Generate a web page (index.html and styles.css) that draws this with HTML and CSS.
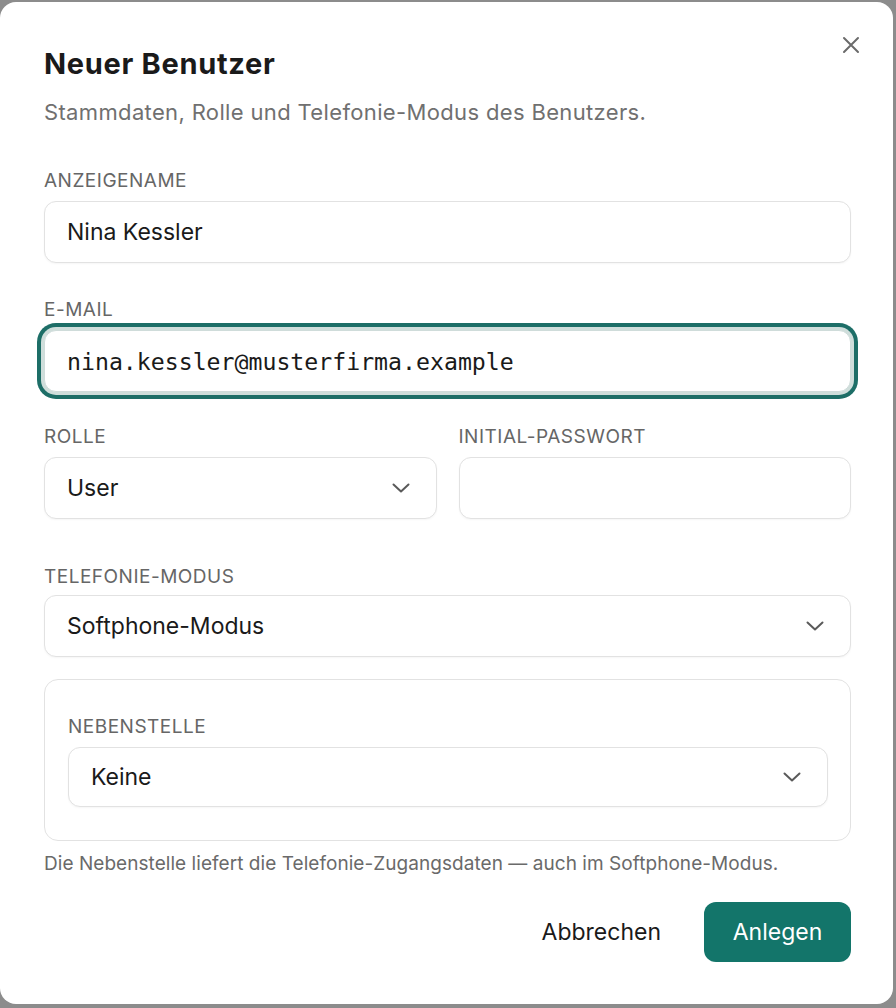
FILE: index.html
```html
<!DOCTYPE html>
<html lang="de">
<head>
<meta charset="utf-8">
<title>Neuer Benutzer</title>
<link rel="stylesheet" href="styles.css">
</head>
<body>
<div class="dialog">
  <button class="close" aria-label="Schließen">
    <svg width="18" height="18" viewBox="0 0 18 18"><path d="M2 2L16 16M16 2L2 16" stroke="#6b6b6b" stroke-width="2" stroke-linecap="round" fill="none"/></svg>
  </button>
  <h1 class="title">Neuer Benutzer</h1>
  <p class="subtitle">Stammdaten, Rolle und Telefonie-Modus des Benutzers.</p>

  <div class="field first">
    <div class="label">ANZEIGENAME</div>
    <div class="control">Nina Kessler</div>
  </div>

  <div class="field">
    <div class="label">E-MAIL</div>
    <div class="control focused mono">nina.kessler@musterfirma.example</div>
  </div>

  <div class="row">
    <div class="field">
      <div class="label">ROLLE</div>
      <div class="control select">User<svg class="chev" width="18" height="10" viewBox="0 0 18 10"><path d="M1.5 1.5L9 8.5L16.5 1.5" stroke="#5a5a5a" stroke-width="2" fill="none" stroke-linecap="round" stroke-linejoin="round"/></svg></div>
    </div>
    <div class="field">
      <div class="label">INITIAL-PASSWORT</div>
      <div class="control"></div>
    </div>
  </div>

  <div class="field tel">
    <div class="label">TELEFONIE-MODUS</div>
    <div class="control select">Softphone-Modus<svg class="chev" width="18" height="10" viewBox="0 0 18 10"><path d="M1.5 1.5L9 8.5L16.5 1.5" stroke="#5a5a5a" stroke-width="2" fill="none" stroke-linecap="round" stroke-linejoin="round"/></svg></div>
  </div>

  <div class="subbox">
    <div class="label">NEBENSTELLE</div>
    <div class="control select">Keine<svg class="chev" width="18" height="10" viewBox="0 0 18 10"><path d="M1.5 1.5L9 8.5L16.5 1.5" stroke="#5a5a5a" stroke-width="2" fill="none" stroke-linecap="round" stroke-linejoin="round"/></svg></div>
  </div>
  <p class="hint">Die Nebenstelle liefert die Telefonie-Zugangsdaten — auch im Softphone-Modus.</p>

  <div class="actions">
    <button class="btn ghost">Abbrechen</button>
    <button class="btn primary">Anlegen</button>
  </div>
</div>
</body>
</html>
```

FILE: styles.css
```css
* { box-sizing: border-box; }
html, body { margin: 0; padding: 0; }
body {
  background: #8c8c8c;
  font-family: Inter, "Noto Sans", "Liberation Sans", sans-serif;
  color: #1a1a1a;
  height: 1008px;
  overflow: hidden;
}
.dialog {
  position: relative;
  margin-top: 2px;
  width: 893px;
  height: 1002px;
  background: #fff;
  border-radius: 16px;
  padding: 45px 42px 0 44px;
}
.close {
  position: absolute;
  top: 34px;
  right: 33px;
  width: 18px;
  height: 18px;
  padding: 0;
  border: 0;
  background: none;
  display: flex;
}
.title {
  margin: 0;
  font-size: 29px;
  line-height: 34px;
  font-weight: 700;
  letter-spacing: 0.7px;
}
.subtitle {
  margin: 17px 0 0;
  font-size: 22px;
  line-height: 28px;
  color: #707070;
  letter-spacing: 0.35px;
}
.field { margin-top: 35px; }
.field.first { margin-top: 43px; }
.label {
  font-size: 19px;
  line-height: 24px;
  color: #666;
  margin-bottom: 8px;
  letter-spacing: 0.5px;
}
.control {
  height: 62px;
  border: 1px solid #e2e2e2;
  border-radius: 12px;
  background: #fff;
  padding: 0 22px;
  display: flex;
  align-items: center;
  font-size: 23px;
  color: #1a1a1a;
  box-shadow: 0 1px 2px rgba(0,0,0,0.04);
}
.control.focused {
  border-color: #cfdcda;
  box-shadow: 0 0 0 3px #cfdedb, 0 0 0 7px #1d6e67;
}
.mono {
  font-family: "DejaVu Sans Mono", "Liberation Mono", monospace;
  font-size: 23.2px;
}
.select { justify-content: space-between; }
.chev { flex: none; margin-right: 4px; }
.row {
  display: grid;
  grid-template-columns: 1fr 1fr;
  column-gap: 22px;
}
.row .field { margin-top: 33px; }
.field.tel { margin-top: 46px; }
.field.tel .label { margin-bottom: 6px; }
.subbox {
  margin-top: 22px;
  border: 1px solid #e2e2e2;
  border-radius: 14px;
  padding: 35px 22px 33px 23px;
}
.subbox .control { height: 60px; }
.hint {
  margin: 12px 0 0;
  font-size: 19px;
  line-height: 22px;
  color: #6a6a6a;
  letter-spacing: 0.05px;
}
.actions {
  margin-top: 27px;
  display: flex;
  justify-content: flex-end;
  gap: 22px;
}
.btn {
  height: 60px;
  border: 0;
  border-radius: 12px;
  font-family: inherit;
  font-size: 23px;
  padding: 0 21px;
  cursor: pointer;
}
.ghost { background: none; color: #1a1a1a; }
.primary { background: #13756a; color: #fff; width: 147px; }
```
